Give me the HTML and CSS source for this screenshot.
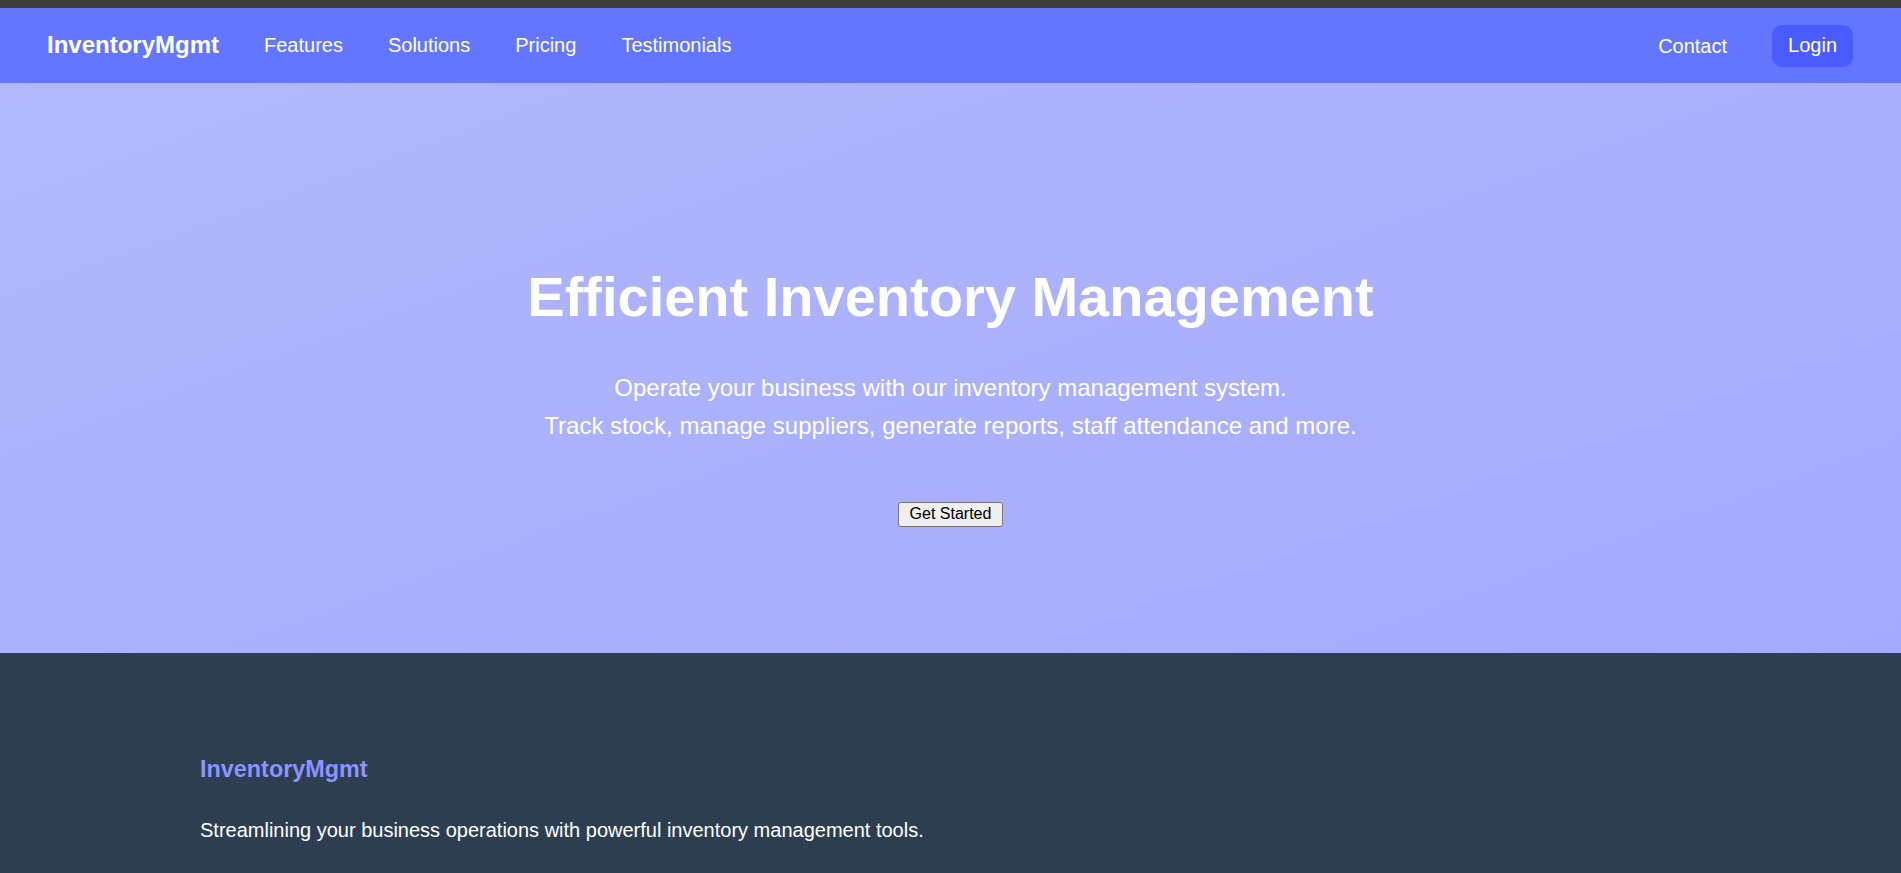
FILE: index.html
```html
<!DOCTYPE html>
<html lang="en">
<head>
<meta charset="utf-8">
<title>InventoryMgmt</title>
<link rel="stylesheet" href="styles.css">
</head>
<body>
<div class="topstrip"></div>
<nav class="navbar">
  <div class="nav-left">
    <a class="brand" href="#">InventoryMgmt</a>
    <a class="nav-link" href="#">Features</a>
    <a class="nav-link" href="#">Solutions</a>
    <a class="nav-link" href="#">Pricing</a>
    <a class="nav-link" href="#">Testimonials</a>
  </div>
  <div class="nav-right">
    <a class="nav-link" href="#">Contact</a>
    <a class="login" href="#">Login</a>
  </div>
</nav>
<section class="hero">
  <h1 class="hero-title">Efficient Inventory Management</h1>
  <p class="hero-text">Operate your business with our inventory management system.<br>Track stock, manage suppliers, generate reports, staff attendance and more.</p>
  <button class="cta" type="button">Get Started</button>
</section>
<footer class="footer">
  <div class="footer-inner">
    <h3 class="footer-brand">InventoryMgmt</h3>
    <p class="footer-text">Streamlining your business operations with powerful inventory management tools.</p>
  </div>
</footer>
</body>
</html>
```
FILE: styles.css
```css
* { box-sizing: border-box; }
html, body { margin: 0; padding: 0; }
body {
  font-family: "Liberation Sans", Arial, sans-serif;
  background: #2d3e50;
  overflow: hidden;
}
a { text-decoration: none; color: #fff; }

.topstrip { height: 8px; background: #3c3c3c; }

.navbar {
  height: 75px;
  background: #6476ff;
  display: flex;
  align-items: center;
  justify-content: space-between;
  padding: 0 48px 0 47px;
}
.nav-left, .nav-right {
  display: flex;
  align-items: center;
  gap: 45px;
}
.brand {
  font-size: 24px;
  font-weight: 700;
  margin-top: -1px;
}
.nav-link { font-size: 20px; margin-top: -1px; }
.nav-right .nav-link { margin-top: 1px; }
.login {
  font-size: 20px;
  background: #4a5cff;
  border-radius: 10px;
  padding: 9px 16px 10px;
  line-height: 23px;
  margin-top: 1px;
}

.hero {
  height: 570px;
  background: linear-gradient(160deg, #b1b8fa 0%, #a5a9fd 100%);
  display: flex;
  flex-direction: column;
  align-items: center;
  padding-top: 182px;
  color: #fff;
  text-align: center;
}
.hero-title {
  margin: 0;
  font-size: 56px;
  line-height: 64px;
  font-weight: 700;
}
.hero-text {
  margin: 40px 0 0;
  font-size: 24px;
  line-height: 38px;
}
.cta {
  margin-top: 57px;
  font-family: "Liberation Sans", Arial, sans-serif;
  font-size: 16px;
  line-height: 18px;
  padding: 2px 11px 3px;
  background: #efefef;
  color: #000;
  border: 1px solid #767676;
  border-radius: 3px;
}

.footer {
  background: #2d3e50;
  height: 220px;
  padding-top: 102px;
}
.footer-inner {
  max-width: 1501px;
  margin: 0 auto;
}
.footer-brand {
  margin: 0;
  font-size: 23.4px;
  line-height: 28px;
  font-weight: 700;
  color: #8b94ff;
}
.footer-text {
  margin: 36px 0 0;
  font-size: 20px;
  line-height: 23px;
  color: #fff;
}
```
